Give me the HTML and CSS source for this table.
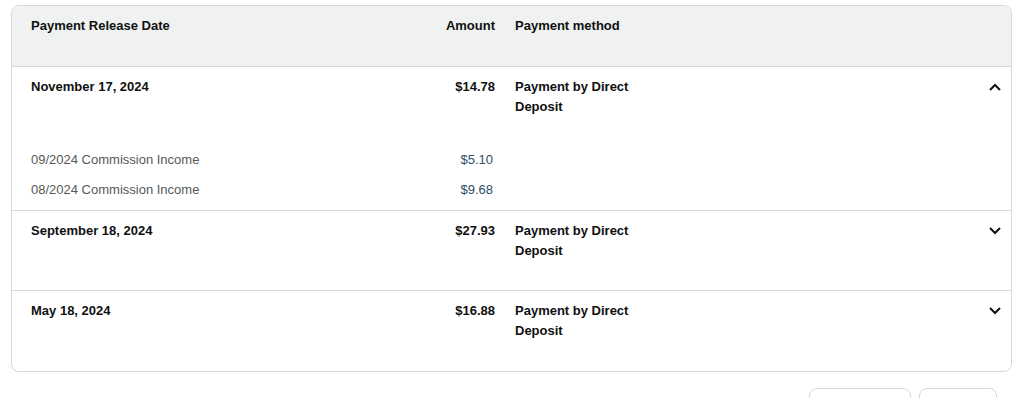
FILE: index.html
```html
<!DOCTYPE html>
<html>
<head>
<meta charset="utf-8">
<link rel="stylesheet" href="styles.css">
</head>
<body>
<div class="page">
  <div class="card">
    <div class="grid head">
      <div>Payment Release Date</div>
      <div class="amt">Amount</div>
      <div class="method">Payment method</div>
    </div>
    <div class="row expanded">
      <div class="grid summary">
        <div>November 17, 2024</div>
        <div class="amt">$14.78</div>
        <div class="method">Payment by Direct Deposit</div>
        <div class="chev"><svg width="12" height="8" viewBox="0 0 12 8"><polyline points="1,7 6,2 11,7" fill="none" stroke="#111" stroke-width="2"/></svg></div>
      </div>
      <div class="details">
        <div class="grid detail">
          <div>09/2024 Commission Income</div>
          <div class="amt sub">$5.10</div>
        </div>
        <div class="grid detail">
          <div>08/2024 Commission Income</div>
          <div class="amt sub">$9.68</div>
        </div>
      </div>
    </div>
    <div class="row">
      <div class="grid summary">
        <div>September 18, 2024</div>
        <div class="amt">$27.93</div>
        <div class="method">Payment by Direct Deposit</div>
        <div class="chev"><svg width="12" height="8" viewBox="0 0 12 8"><polyline points="1,1 6,6 11,1" fill="none" stroke="#111" stroke-width="2"/></svg></div>
      </div>
    </div>
    <div class="row last">
      <div class="grid summary">
        <div>May 18, 2024</div>
        <div class="amt">$16.88</div>
        <div class="method">Payment by Direct Deposit</div>
        <div class="chev"><svg width="12" height="8" viewBox="0 0 12 8"><polyline points="1,1 6,6 11,1" fill="none" stroke="#111" stroke-width="2"/></svg></div>
      </div>
    </div>
  </div>
  <div class="pager">
    <button class="btn prev" aria-label="Previous"></button>
    <button class="btn next" aria-label="Next"></button>
  </div>
</div>
</body>
</html>
```

FILE: styles.css
```css
html, body {
  margin: 0;
  padding: 0;
  background: #fff;
}
body {
  font-family: "Liberation Sans", Arial, sans-serif;
  font-size: 13px;
  line-height: 20px;
  color: #0f1111;
}
.page {
  padding: 5px 7px 0 11px;
}
.card {
  border: 1px solid #d5d9d9;
  border-radius: 8px;
  overflow: hidden;
}
.grid {
  display: grid;
  grid-template-columns: 340px 124px 20px 135px 1fr 12px;
  padding: 0 10px 0 19px;
}
.grid > :nth-child(1) { grid-column: 1; }
.grid > .amt { grid-column: 2; text-align: right; }
.grid > .method { grid-column: 4; }
.grid > .chev { grid-column: 6; }
.head {
  background: #f0f2f2;
  font-weight: bold;
  height: 61px;
  padding-top: 10px;
  box-sizing: border-box;
  border-bottom: 1px solid #d5d9d9;
}
.row {
  border-bottom: 1px solid #d5d9d9;
}
.row.last {
  border-bottom: none;
}
.summary {
  font-weight: bold;
  padding-top: 10px;
  padding-bottom: 29px;
}
.row.last .summary {
  padding-bottom: 30px;
}
.row.expanded .summary {
  padding-bottom: 28px;
}
.chev {
  display: flex;
  justify-content: flex-end;
  padding-top: 6px;
  height: 8px;
}
.chev svg {
  display: block;
}
.details {
  padding-bottom: 5px;
}
.detail {
  line-height: 30px;
  color: #565959;
}
.detail .sub {
  color: #2f4f62;
  padding-right: 2px;
}
.pager {
  display: flex;
  justify-content: flex-end;
  gap: 8px;
  margin-top: 16px;
  padding-right: 15px;
}
.btn {
  background: #fff;
  border: 1px solid #d5d9d9;
  border-radius: 8px;
  height: 31px;
  padding: 0;
}
.prev { width: 102px; }
.next { width: 78px; }
```
